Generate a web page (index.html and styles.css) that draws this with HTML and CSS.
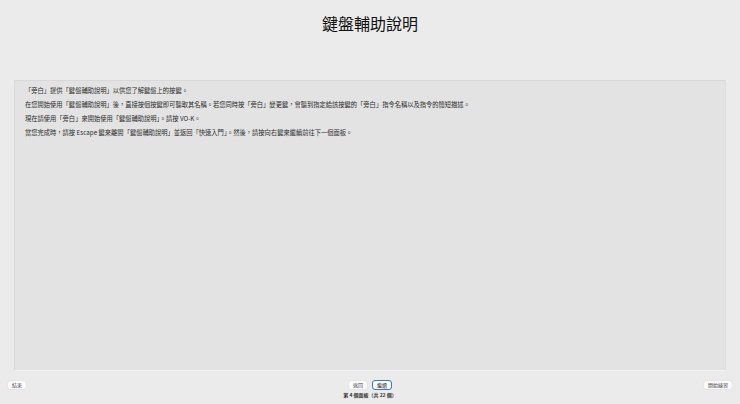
FILE: index.html
```html
<!DOCTYPE html>
<html lang="zh-Hant">
<head>
<meta charset="utf-8">
<title>鍵盤輔助說明</title>
<link rel="stylesheet" href="styles.css">
</head>
<body>
<main class="window">
  <h1 class="title">鍵盤輔助說明</h1>
  <section class="panel">
    <p>「旁白」提供「鍵盤輔助說明」以供您了解鍵盤上的按鍵。</p>
    <p>在您開始使用「鍵盤輔助說明」後，直接按個按鍵即可聽取其名稱。若您同時按「旁白」變更鍵，會聽到指定給該按鍵的「旁白」指令名稱以及指令的簡短描述。</p>
    <p>現在請使用「旁白」來開始使用「鍵盤輔助說明」。請按 VO-K。</p>
    <p>當您完成時，請按 Escape 鍵來離開「鍵盤輔助說明」並返回「快速入門」。然後，請按向右鍵來繼續前往下一個面板。</p>
  </section>
  <footer class="footer">
    <div class="side"><button class="btn">結束</button></div>
    <div class="center">
      <div class="nav">
        <button class="btn">返回</button>
        <button class="btn btn-focus">繼續</button>
      </div>
      <div class="count">第 4 個面板（共 22 個）</div>
    </div>
    <div class="side side-end"><button class="btn">開始練習</button></div>
  </footer>
</main>
</body>
</html>
```

FILE: styles.css
```css
* { box-sizing: border-box; }
html, body { margin: 0; height: 100%; }
body {
  background: #ebebeb;
  color: #1c1c1c;
  font-family: "Noto Sans CJK TC", "Liberation Sans", sans-serif;
}
.window {
  width: 740px;
  height: 404px;
  display: flex;
  flex-direction: column;
  overflow: hidden;
}
.title {
  margin: 0;
  height: 80px;
  flex: none;
  padding-top: 12px;
  text-align: center;
  font-size: 16px;
  line-height: 22px;
  font-weight: 400;
  color: #111;
}
.panel {
  margin: 0 14px;
  height: 291px;
  flex: none;
  padding: 6px 10px;
  background: #e3e3e3;
  border: 1px solid #d8d8d8;
  border-bottom-color: #f3f3f3;
  border-right-color: #dedede;
}
.panel p {
  margin: 0;
  height: 14px;
  font-size: 6.28px;
  line-height: 8px;
  color: #2c2c2c;
  white-space: nowrap;
}
.footer {
  flex: 1;
  display: flex;
  justify-content: space-between;
  align-items: flex-start;
  padding: 10px 8px 0;
}
.side { width: 120px; display: flex; }
.side-end { justify-content: flex-end; }
.center {
  display: flex;
  flex-direction: column;
  align-items: center;
  gap: 2px;
}
.nav { display: flex; gap: 6px; }
.btn {
  height: 8px;
  margin: 0;
  padding: 0 4px;
  border: 0;
  border-radius: 2px;
  background: #fbfbfb;
  box-shadow: 0 0 1px rgba(0,0,0,.2);
  color: #444;
  font: 5px/8px "Noto Sans CJK TC", sans-serif;
}
.btn-focus {
  outline: 1px solid #3c78c8;
  color: #222;
}
.count {
  font-size: 5px;
  line-height: 8px;
  font-weight: 700;
  color: #333;
}
```
